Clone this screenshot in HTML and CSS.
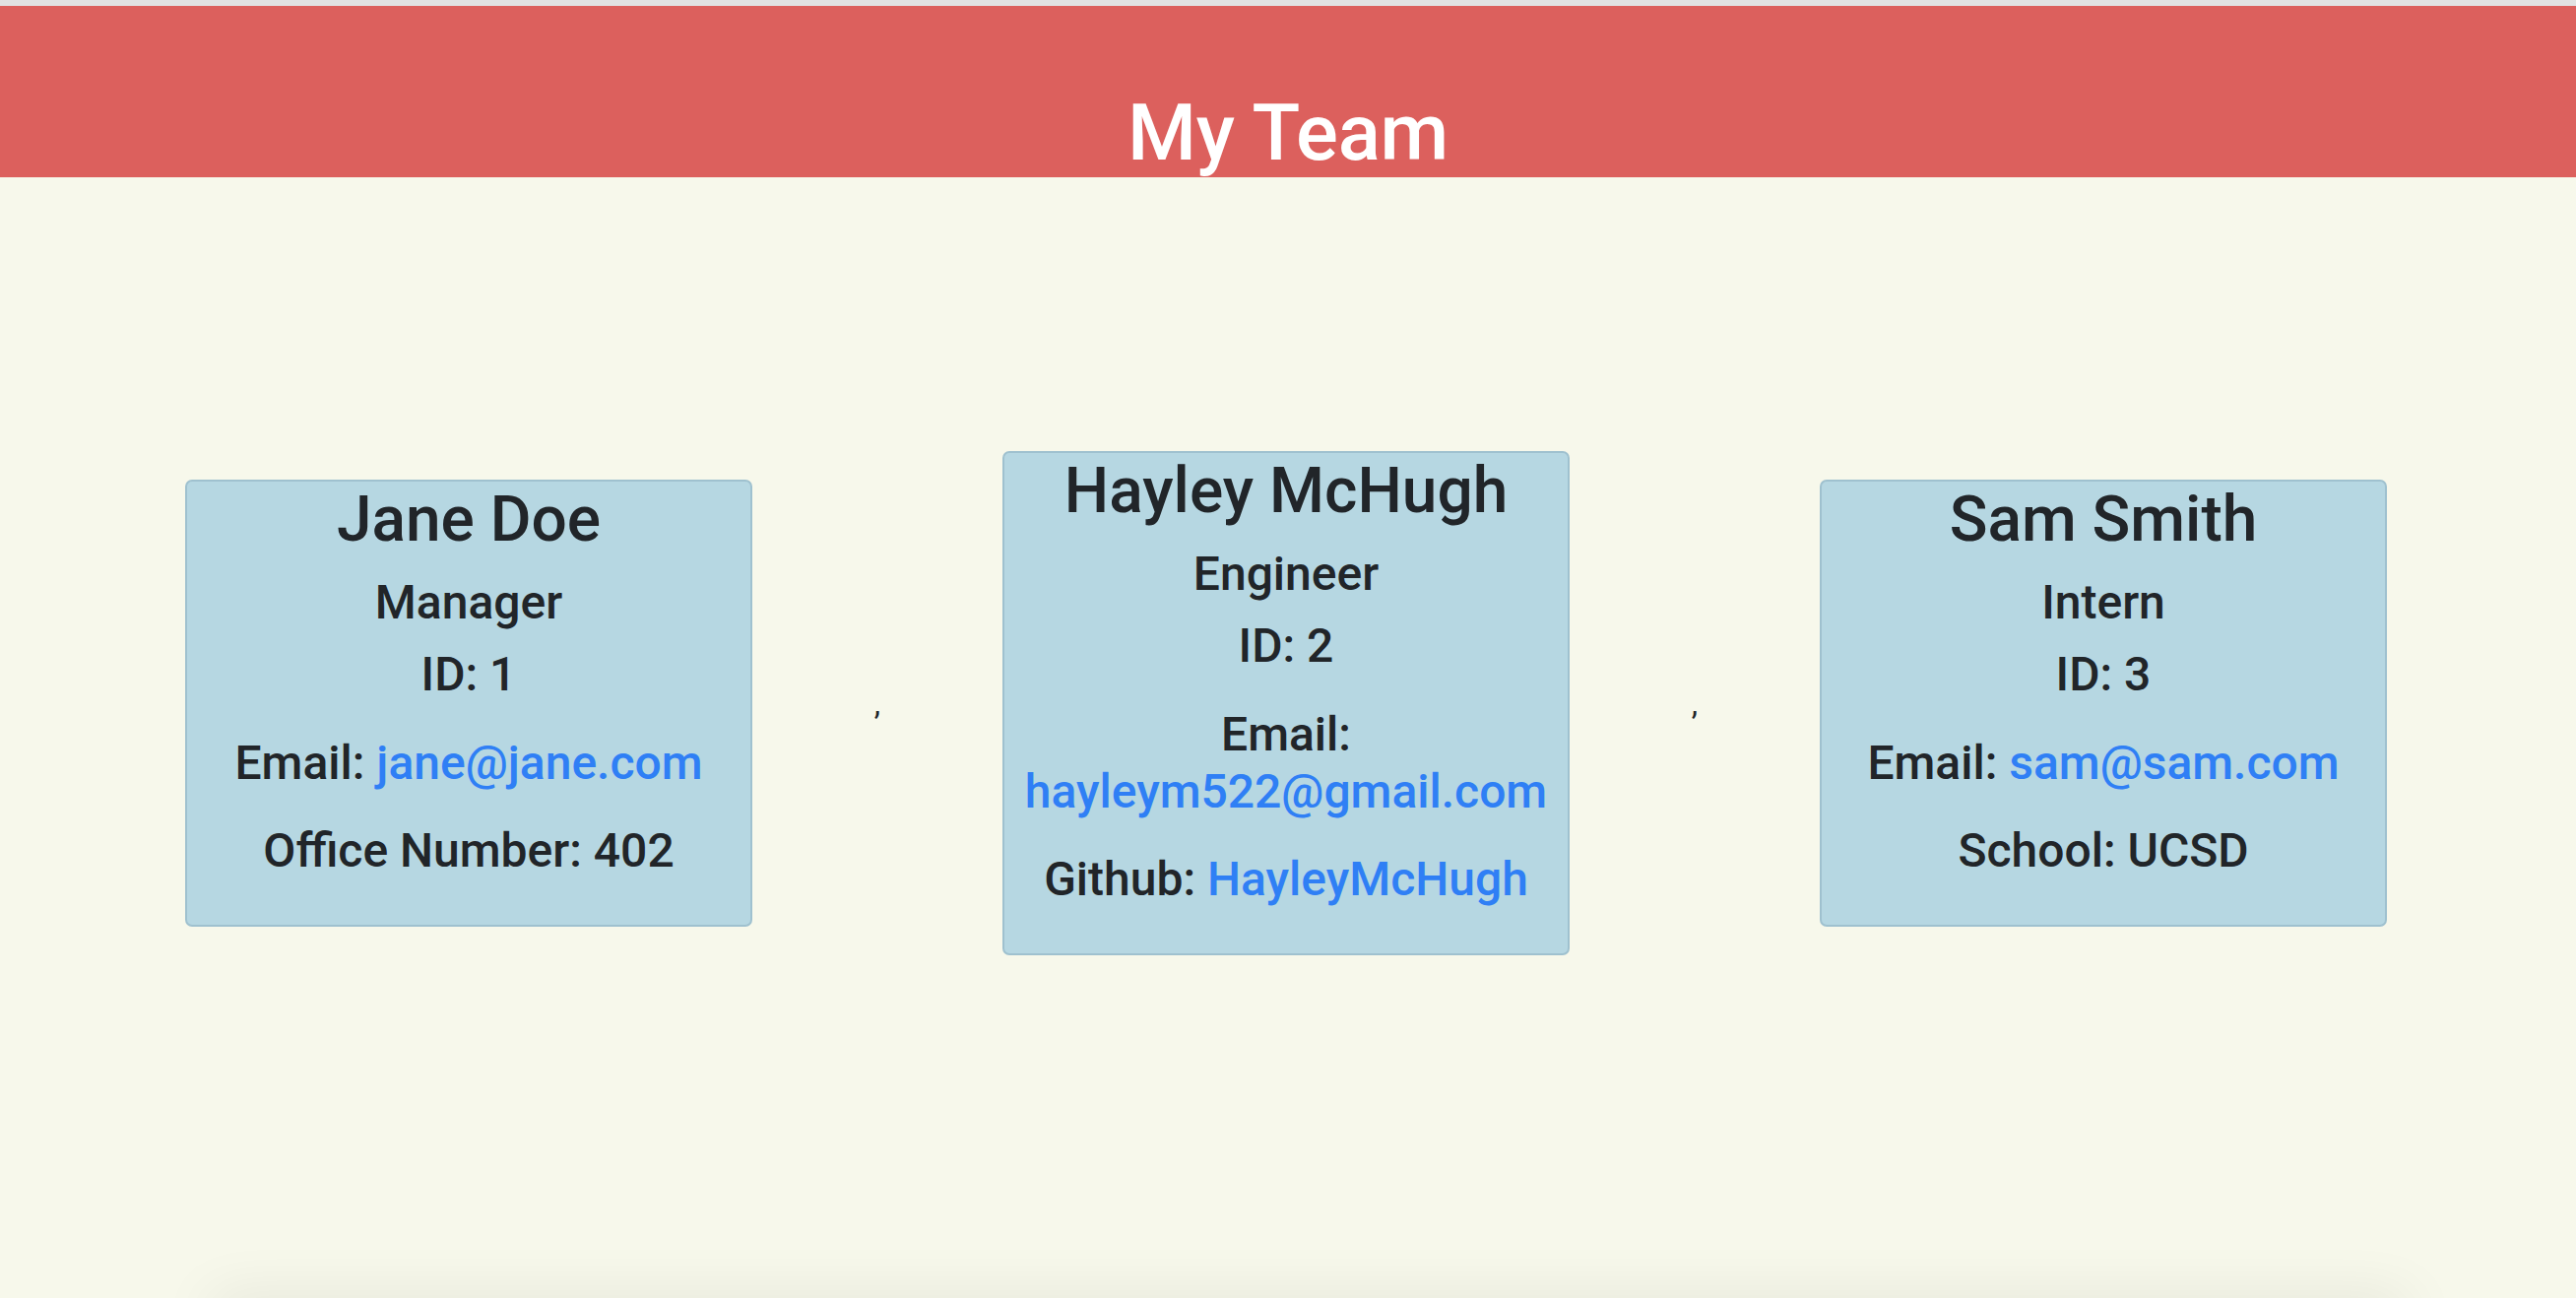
FILE: index.html
```html
<!DOCTYPE html>
<html lang="en">
<head>
<meta charset="utf-8">
<title>My Team</title>
<link rel="stylesheet" href="styles.css">
</head>
<body>
<div class="topline"></div>
<header class="banner">
  <h1 class="banner-title">My Team</h1>
</header>
<main class="team">
  <div class="team-row">
    <div class="card">
      <h2 class="card-name">Jane Doe</h2>
      <h4 class="card-role">Manager</h4>
      <h4 class="card-id">ID: 1</h4>
      <h4 class="card-line">Email: <a class="card-link" href="mailto:jane@jane.com">jane@jane.com</a></h4>
      <h4 class="card-line">Office Number: 402</h4>
    </div>
    <span class="sep">,</span>
    <div class="card">
      <h2 class="card-name">Hayley McHugh</h2>
      <h4 class="card-role">Engineer</h4>
      <h4 class="card-id">ID: 2</h4>
      <h4 class="card-line">Email: <a class="card-link" href="mailto:hayleym522@gmail.com">hayleym522@gmail.com</a></h4>
      <h4 class="card-line">Github: <a class="card-link" href="#">HayleyMcHugh</a></h4>
    </div>
    <span class="sep">,</span>
    <div class="card">
      <h2 class="card-name">Sam Smith</h2>
      <h4 class="card-role">Intern</h4>
      <h4 class="card-id">ID: 3</h4>
      <h4 class="card-line">Email: <a class="card-link" href="mailto:sam@sam.com">sam@sam.com</a></h4>
      <h4 class="card-line">School: UCSD</h4>
    </div>
  </div>
</main>
<div class="page-end"></div>
</body>
</html>
```
FILE: styles.css
```css
html, body {
  margin: 0;
  padding: 0;
  height: 100%;
}
body {
  background: #f7f8eb;
  font-family: Roboto, "Liberation Sans", sans-serif;
  color: #212529;
  display: flex;
  flex-direction: column;
  overflow: hidden;
}
.topline {
  flex: none;
  height: 6px;
  background: #e2e2e2;
}
.banner {
  flex: none;
  height: 174px;
  box-sizing: border-box;
  padding-top: 81px;
  background: #dc605d;
  text-align: center;
}
.banner-title {
  margin: 0;
  font-size: 80px;
  line-height: 96px;
  font-weight: 500;
  letter-spacing: -0.3px;
  color: #ffffff;
}
.team {
  flex: 1 1 0;
  min-height: 0;
  padding: 278px 0 0 188px;
  box-sizing: border-box;
}
.team-row {
  display: flex;
  flex-direction: row;
  align-items: center;
}
.team-row > * {
  flex: none;
}
.card {
  width: 576px;
  box-sizing: border-box;
  background: #b6d7e2;
  border: 2px solid #9fc1cf;
  border-radius: 7px;
  padding: 1px 12px 46px;
  text-align: center;
}
.card-name {
  margin: 0 0 16px;
  font-size: 64px;
  line-height: 76.8px;
  font-weight: 500;
}
.card-role,
.card-id,
.card-line {
  margin: 0;
  font-size: 48px;
  line-height: 57.6px;
  font-weight: 500;
}
.card-role {
  margin-bottom: 16px;
}
.card-id {
  margin-bottom: 32px;
}
.card-line + .card-line {
  margin-top: 32px;
}
.card-link {
  color: #2f7ff5;
  text-decoration: none;
}
.sep {
  width: 254px;
  text-align: center;
  font-size: 32px;
  line-height: 48px;
}
.page-end {
  flex: none;
  height: 40px;
  margin: 0 171px -40px 215px;
  box-shadow: 0 0 60px rgba(0, 0, 0, 0.09);
}
```
